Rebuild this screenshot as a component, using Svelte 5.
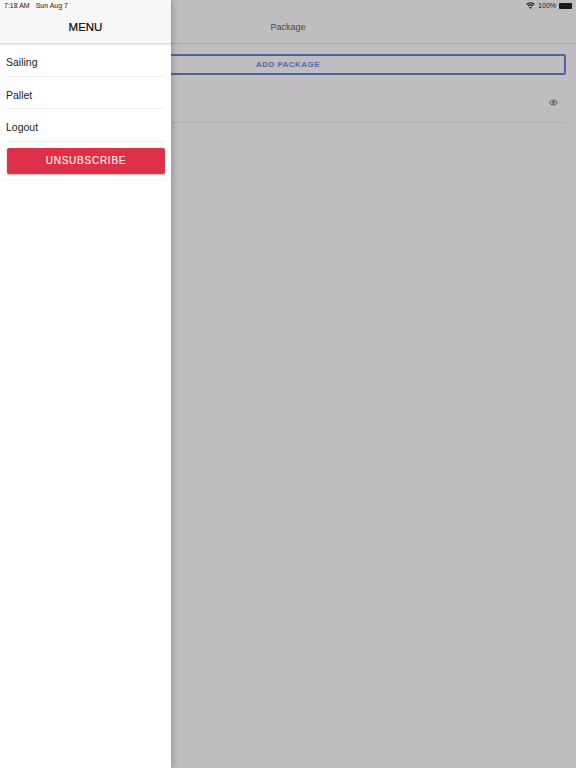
<script>
  const menu = ['Sailing', 'Pallet', 'Logout'];
</script>

<div class="page">
  <div class="content">
    <div class="status">
      <span class="status-right">
        <svg class="wifi" viewBox="0 0 16 12" width="9" height="7"><path d="M8 12 5.600 9.200a3.400 3.400 0 0 1 4.800 0L8 12Zm-3.600-4.200L3 6.200a7.400 7.400 0 0 1 10 0l-1.400 1.600a5.300 5.300 0 0 0-7.200 0ZM1.900 4.900.4 3.200a11.400 11.400 0 0 1 15.200 0l-1.500 1.700a9.200 9.200 0 0 0-12.200 0Z" fill="#111"/></svg>
        <span>100%</span>
        <span class="battery"></span>
      </span>
    </div>
    <div class="title">Package</div>
    <div class="body">
      <button class="add">ADD PACKAGE</button>
      <div class="row">
        <svg viewBox="0 0 16 12" width="9" height="7"><path d="M1 6c2-3 4.300-4.500 7-4.500S13 3 15 6c-2 3-4.300 4.500-7 4.500S3 9 1 6Z" fill="none" stroke="#777" stroke-width="1.800"/><circle cx="8" cy="6" r="2.500" fill="#777"/></svg>
      </div>
    </div>
  </div>

  <div class="scrim"></div>

  <aside class="drawer">
    <div class="drawer-head">
      <div class="drawer-status"><span>7:18 AM</span><span>Sun Aug 7</span></div>
      <div class="drawer-title">MENU</div>
    </div>
    <nav>
      {#each menu as item}
        <div class="item">{item}</div>
      {/each}
    </nav>
    <div class="unsub-wrap">
      <button class="unsub">UNSUBSCRIBE</button>
    </div>
  </aside>
</div>

<style>
  :global(body) {
    margin: 0;
    font-family: "Liberation Sans", Arial, sans-serif;
  }
  .page {
    position: relative;
    width: 576px;
    height: 768px;
    overflow: hidden;
    background: #fff;
  }
  .content {
    display: flex;
    flex-direction: column;
    height: 100%;
  }
  .status {
    display: flex;
    justify-content: flex-end;
    height: 11px;
    padding: 0 4px 0 0;
    font-size: 7px;
    line-height: 11px;
    color: #111;
  }
  .status-right {
    display: flex;
    align-items: center;
    gap: 3px;
  }
  .battery {
    width: 13px;
    height: 6px;
    background: #111;
    border-radius: 1px;
  }
  .title {
    height: 33px;
    box-sizing: border-box;
    padding-top: 10px;
    text-align: center;
    font-size: 9px;
    line-height: 12px;
    color: #555;
    border-bottom: 1px solid #dcdcdc;
  }
  .body {
    display: flex;
    flex-direction: column;
    padding: 10px 10px 0;
  }
  .add {
    height: 21px;
    padding: 0;
    border: 2px solid #5580d0;
    border-radius: 2px;
    background: transparent;
    color: #5f86dc;
    font: bold 8px/1 "Liberation Sans", Arial, sans-serif;
    letter-spacing: 0.45px;
  }
  .row {
    display: flex;
    justify-content: flex-end;
    align-items: center;
    box-sizing: border-box;
    height: 48px;
    padding: 8px 8px 0 0;
    border-bottom: 1px solid #eaeaea;
  }
  .scrim {
    position: absolute;
    inset: 0;
    background: rgba(50, 42, 50, 0.31);
  }
  .drawer {
    position: absolute;
    top: 0;
    left: 0;
    bottom: 0;
    width: 171px;
    background: #fff;
    box-shadow: 2px 0 6px rgba(0, 0, 0, 0.2);
  }
  .drawer-head {
    box-sizing: border-box;
    height: 44px;
    background: #f7f7f8;
    border-bottom: 1px solid #dcdcdc;
    box-shadow: 0 1px 2px rgba(0, 0, 0, 0.1);
  }
  .drawer-status {
    display: flex;
    gap: 6px;
    height: 11px;
    padding-left: 4px;
    font-size: 7px;
    line-height: 11px;
    color: #222;
  }
  .drawer-title {
    padding-top: 10px;
    text-align: center;
    font-size: 11.500px;
    line-height: 13px;
    color: #000;
    -webkit-text-stroke: 0.15px #000;
  }
  nav {
    display: flex;
    flex-direction: column;
  }
  .item {
    box-sizing: border-box;
    height: 32.500px;
    margin-left: 5px;
    margin-right: 7px;
    padding-left: 1px;
    border-bottom: 1px solid #f1f1f1;
    font-size: 10.500px;
    line-height: 36px;
    color: #222;
  }
  .unsub-wrap {
    padding: 6px 6px 5px 7px;
    border-bottom: 1px solid #f5f5f5;
  }
  .unsub {
    display: block;
    width: 100%;
    height: 26px;
    padding: 0;
    border: none;
    border-radius: 2px;
    background: #dc3149;
    color: #f9e6e8;
    font: 10px/1 "Liberation Sans", Arial, sans-serif;
    -webkit-text-stroke: 0.2px #f9e6e8;
    letter-spacing: 0.75px;
    box-shadow: 0 1px 2px rgba(0, 0, 0, 0.3);
  }
</style>
